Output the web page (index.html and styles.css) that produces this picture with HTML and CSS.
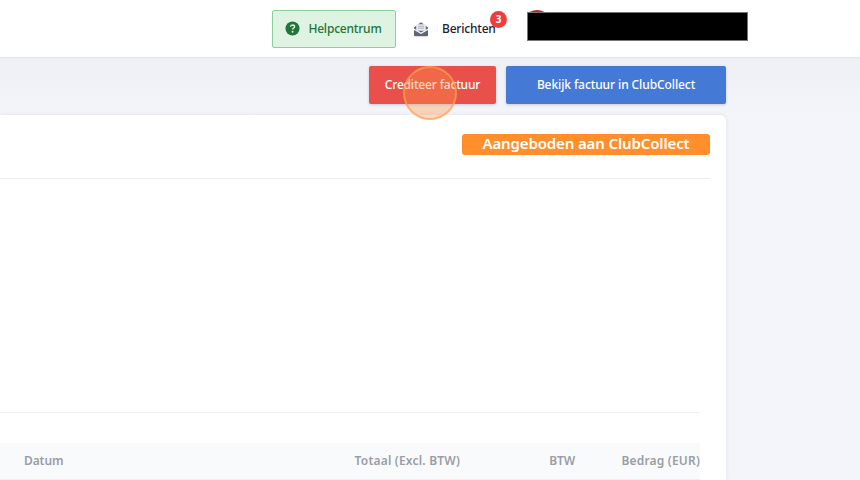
FILE: index.html
```html
<!DOCTYPE html>
<html lang="nl">
<head>
<meta charset="utf-8">
<title>Factuur</title>
<link rel="stylesheet" href="styles.css">
</head>
<body>
<header class="topbar">
  <a class="help">
    <svg class="help-icon" viewBox="0 0 16 16" width="15" height="15"><circle cx="8" cy="8" r="7.5" fill="#23743a"/><path d="M5.9 6.200c.1-1.300 1-2 2.200-2 1.200 0 2.100.7 2.100 1.800 0 1.600-2.100 1.600-2.100 3.100" fill="none" stroke="#dff3e2" stroke-width="1.500"/><circle cx="8.100" cy="11.400" r="1" fill="#dff3e2"/></svg>
    Helpcentrum
  </a>
  <a class="messages">
    <svg class="mail-icon" viewBox="0 0 16 16" width="16" height="16"><path d="M1 6.500 8 1.200l7 5.300V14a1.300 1.300 0 0 1-1.300 1.300H2.300A1.300 1.300 0 0 1 1 14z" fill="#5f6675"/><rect x="3.200" y="3.200" width="9.600" height="6.600" rx="1" fill="#e9ebef"/><path d="M5 5.300h6M5 7.200h6" stroke="#a6abb5" stroke-width=".9"/><path d="M1 7.500 8 11.600l7-4.100V9L8 13 1 9z" fill="#f4f5f7"/></svg>
    <span class="messages-label">Berichten</span>
    <span class="count">3</span>
  </a>
  <div class="user">
    <span class="avatar"></span>
    <span class="redacted"></span>
  </div>
</header>
<main class="content">
  <div class="actions">
    <button class="btn btn-red">Crediteer factuur</button>
    <button class="btn btn-blue">Bekijk factuur in ClubCollect</button>
  </div>
  <section class="card">
    <div class="card-head">
      <span class="status">Aangeboden aan ClubCollect</span>
    </div>
    <div class="card-body"></div>
    <table class="lines">
      <thead>
        <tr>
          <th class="col-date">Datum</th>
          <th class="col-total">Totaal (Excl. BTW)</th>
          <th class="col-vat">BTW</th>
          <th class="col-amount">Bedrag (EUR)</th>
        </tr>
      </thead>
    </table>
  </section>
</main>
<div class="click-marker"></div>
</body>
</html>
```
FILE: styles.css
```css
* { box-sizing: border-box; }
html, body { margin: 0; height: 100%; }
body {
  width: 860px;
  height: 480px;
  overflow: hidden;
  background: #f4f5fa;
  font-family: "Noto Sans", "Open Sans", sans-serif;
  font-size: 12px;
  position: relative;
}
.topbar {
  height: 58px;
  background: #fff;
  border-bottom: 1px solid #e4e5ea;
  display: flex;
  align-items: flex-start;
  padding: 10px 112px 0 272px;
}
.help {
  width: 124px;
  height: 38px;
  display: flex;
  align-items: center;
  justify-content: center;
  gap: 8px;
  padding-bottom: 1px;
  padding-right: 1px;
  background: #def3e1;
  border: 1px solid #8ccf9b;
  border-radius: 2px;
  color: #23743a;
  font-weight: 500;
  letter-spacing: -0.2px;
}
.messages {
  display: flex;
  align-items: center;
  position: relative;
  height: 38px;
  margin-left: 17px;
  padding-bottom: 1px;
  width: 98px;
  color: #1b2233;
  font-weight: 500;
  letter-spacing: -0.2px;
}
.mail-icon { margin-right: 13px; }
.count {
  position: absolute;
  left: 77px;
  top: 1px;
  width: 17px;
  height: 17px;
  border-radius: 50%;
  background: #ef3d3b;
  color: #fff;
  font-size: 10px;
  font-weight: 700;
  line-height: 17px;
  text-align: center;
}
.user {
  position: relative;
  margin-left: 16px;
  margin-top: 2px;
  width: 221px;
  height: 29px;
}
.avatar {
  position: absolute;
  left: 0;
  top: -2px;
  width: 20px;
  height: 12px;
  border-radius: 50%;
  background: #c0271d;
}
.redacted {
  position: absolute;
  inset: 0;
  background: #000;
  border: 1px solid #777;
}
.content {
  background: linear-gradient(#eef0f5, #f4f5fa 60px);
  height: 422px;
  padding-top: 8px;
}
.actions {
  display: flex;
  justify-content: flex-end;
  gap: 10px;
  width: 726px;
}
.btn {
  height: 38px;
  border: 0;
  border-radius: 2px;
  color: #fff;
  font-family: inherit;
  font-size: 12px;
  font-weight: 500;
  letter-spacing: -0.17px;
  padding: 0 0 2px;
  box-shadow: 0 1px 3px rgba(40, 50, 80, 0.2);
}
.btn-red { width: 127px; background: #e9504b; }
.btn-blue { width: 220px; background: #4479d6; letter-spacing: -0.1px; }
.card {
  width: 726px;
  height: 365px;
  margin-top: 11px;
  background: #fff;
  border-radius: 0 6px 0 0;
  box-shadow: 0 0 4px rgba(60, 70, 100, 0.1);
  padding: 19px 16px 0 0;
}
.card-head {
  height: 45px;
  display: flex;
  justify-content: flex-end;
  align-items: flex-start;
  border-bottom: 1px solid #edeef1;
}
.status {
  width: 248px;
  height: 21px;
  border-radius: 3px;
  background: #ff8f2b;
  color: #fff;
  font-size: 15px;
  font-weight: 600;
  line-height: 19px;
  text-align: center;
  letter-spacing: -0.13px;
}
.card-body {
  height: 234px;
  margin-right: 10px;
  border-bottom: 1px solid #edeef1;
}
.lines {
  width: 700px;
  margin-top: 30px;
  border-collapse: collapse;
  table-layout: fixed;
}
.lines th {
  height: 36px;
  background: #f9fafc;
  border-bottom: 1px solid #edeef1;
  color: #9a9da5;
  font-size: 12px;
  font-weight: 600;
  letter-spacing: -0.1px;
  padding: 0;
  text-align: right;
}
.lines .col-date { width: 340px; padding-left: 24px; text-align: left; }
.lines .col-total { width: 120px; white-space: nowrap; letter-spacing: 0.2px; }
.lines .col-vat { width: 115px; }
.lines .col-amount { width: 125px; letter-spacing: 0.2px; }
.click-marker {
  position: absolute;
  left: 403px;
  top: 66px;
  width: 54px;
  height: 54px;
  border-radius: 50%;
  background: rgba(255, 150, 70, 0.35);
  border: 2px solid rgba(255, 160, 80, 0.7);
}
```
